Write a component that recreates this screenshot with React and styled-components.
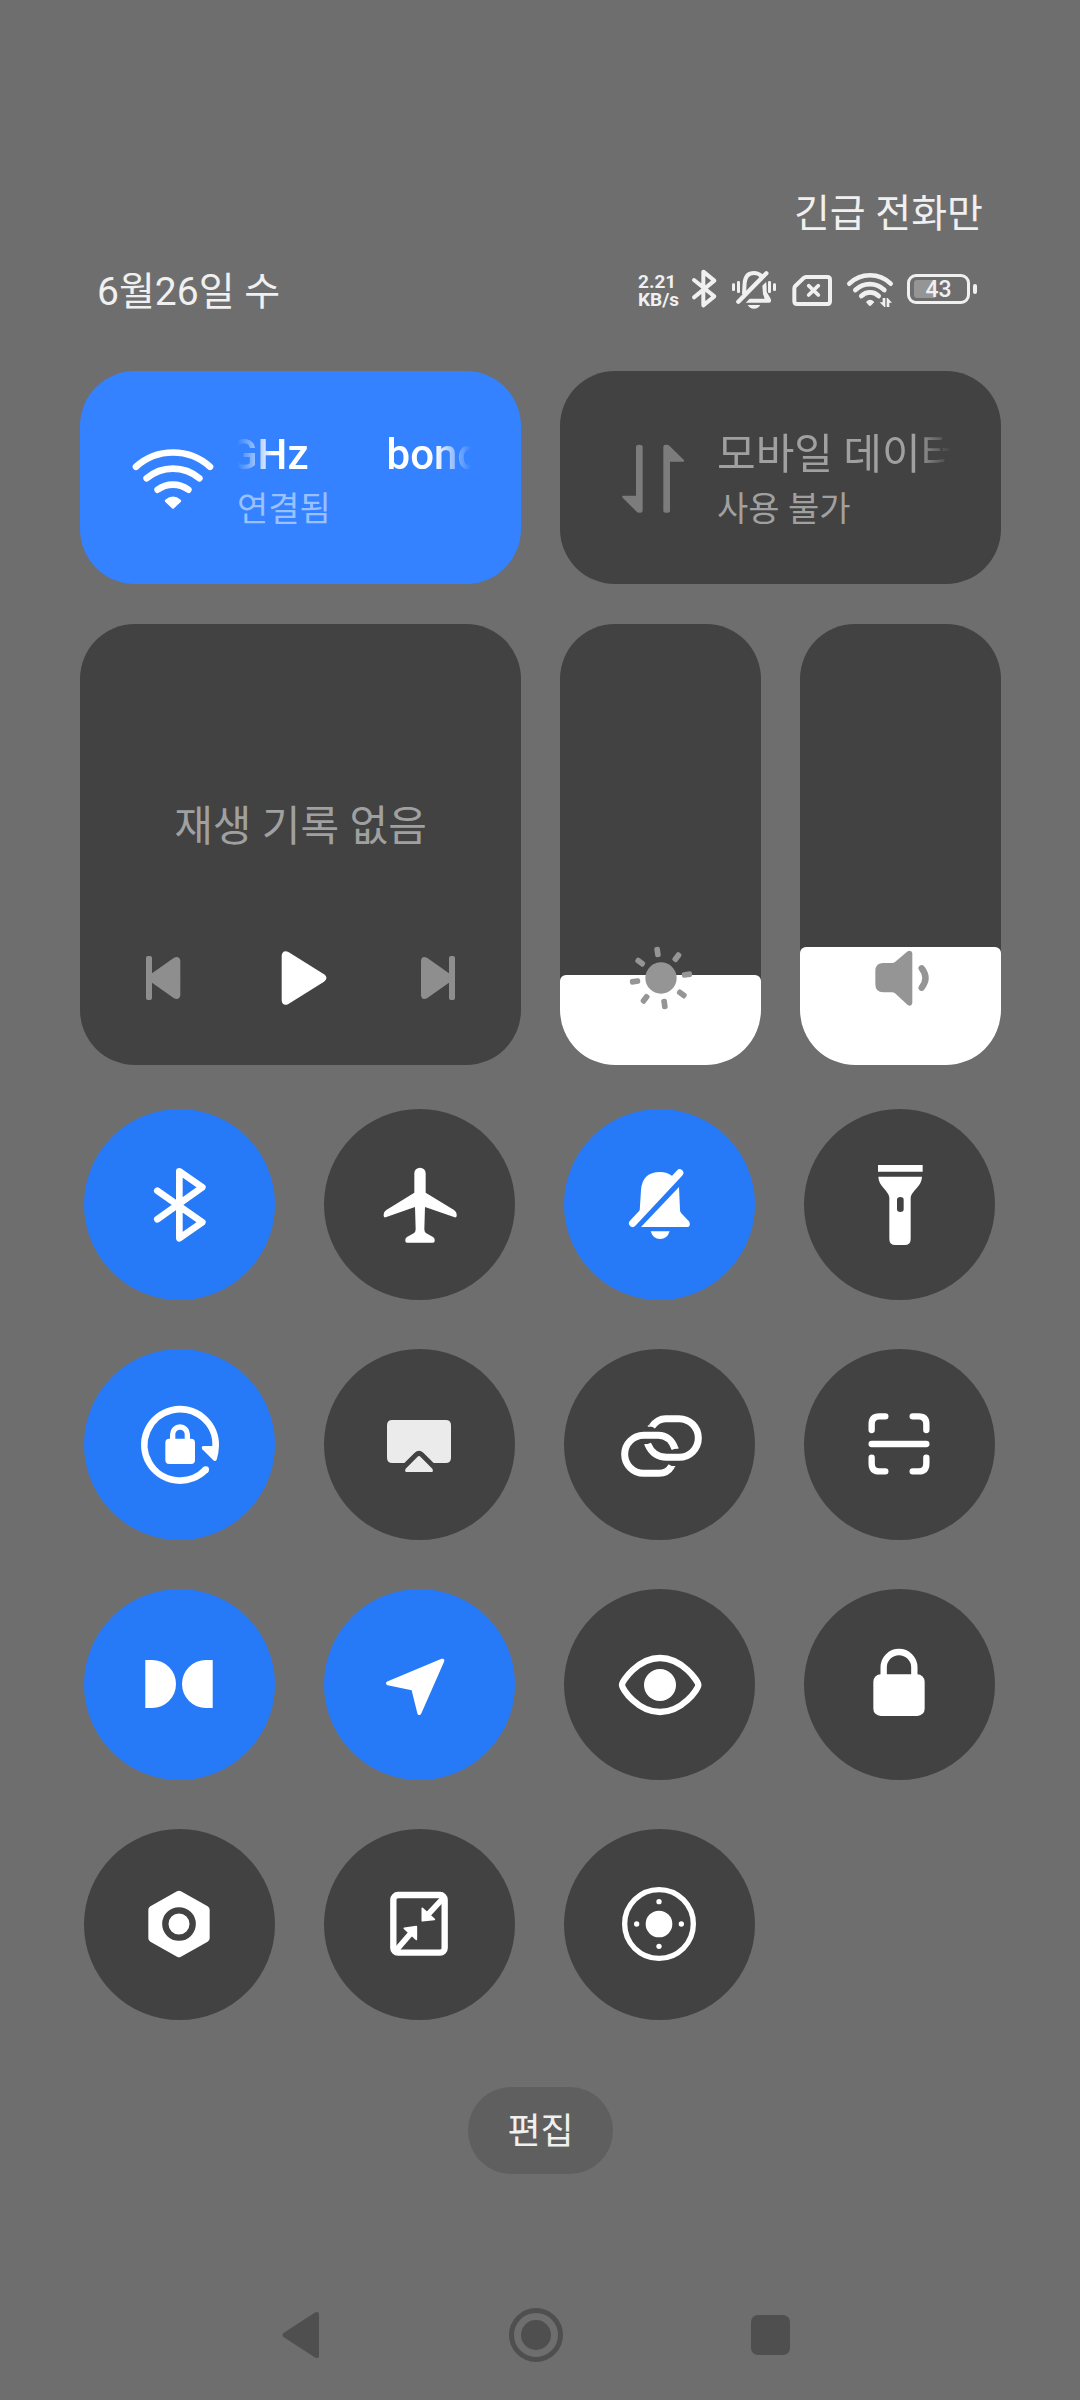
import React, { useState } from 'react'
import styled, { createGlobalStyle } from 'styled-components'

const MAX_LEVEL = 255

function App() {
    const [brightness, setBrightness] = useState(52)
    const [volume, setVolume] = useState(68)

    return (
        <>
            <GlobalStyle />
            <PageStyled>
                <HeaderStyled>
                    <Carrier>긴급 전화만</Carrier>
                    <div className="header-row">
                        <DateText>6월26일 수</DateText>
                        <StatusBar />
                    </div>
                </HeaderStyled>

                <PanelGrid>
                    <NetworkTile type="button" $active>
                        <WifiIcon />
                        <span className="labels">
                            <TileTitle $marquee>
                                <b>GHz</b>
                                <b>bond</b>
                            </TileTitle>
                            <TileState $active>연결됨</TileState>
                        </span>
                    </NetworkTile>
                    <NetworkTile type="button">
                        <DataIcon />
                        <span className="labels">
                            <TileTitle>모바일 데이터</TileTitle>
                            <TileState>사용 불가</TileState>
                        </span>
                    </NetworkTile>

                    <MediaCard>
                        <p>재생 기록 없음</p>
                        <div className="controls">
                            <MediaButton type="button" aria-label="이전">
                                <PreviousIcon />
                            </MediaButton>
                            <MediaButton type="button" aria-label="재생" $primary>
                                <PlayIcon />
                            </MediaButton>
                            <MediaButton type="button" aria-label="다음">
                                <NextIcon />
                            </MediaButton>
                        </div>
                    </MediaCard>
                    <Slider label="밝기" value={brightness} onChange={setBrightness} icon={<SunIcon />} />
                    <Slider label="음량" value={volume} onChange={setVolume} icon={<SpeakerIcon />} />
                </PanelGrid>

                <ToggleGrid>
                    {toggles.map(({ name, active, icon }) => (
                        <ToggleButton key={name} type="button" aria-label={name} aria-pressed={active} $active={active}>
                            <svg viewBox="0 0 573 573" fill="currentColor">{icon}</svg>
                        </ToggleButton>
                    ))}
                </ToggleGrid>

                <EditButton type="button">편집</EditButton>

                <NavBar>
                    <button type="button" aria-label="뒤로">
                        <svg viewBox="0 0 80 80" fill="currentColor">
                            <path d="M22.5 38 L54 17.5 Q58 15.5 58 20 V60 Q58 64.5 54 62.5 L22.5 42 Q20.5 40 22.5 38Z" />
                        </svg>
                    </button>
                    <button type="button" aria-label="홈">
                        <svg viewBox="0 0 80 80" fill="currentColor">
                            <circle cx="40" cy="40" r="24.5" fill="none" stroke="currentColor" strokeWidth="5" />
                            <circle cx="40" cy="40" r="15" />
                        </svg>
                    </button>
                    <button type="button" aria-label="최근 앱">
                        <svg viewBox="0 0 80 80" fill="currentColor">
                            <rect x="20" y="20" width="39" height="40" rx="7" />
                        </svg>
                    </button>
                </NavBar>
            </PageStyled>
        </>
    )
}

function StatusBar() {
    return (
        <StatusStyled>
            <span className="speed">2.21<br />KB/s</span>
            <StatusIcon $width={24} viewBox="0 0 72 126">
                <path d="M3 36 L64 85 L31 112 V11 L64 38 L3 88" fill="none" stroke="currentColor" strokeWidth="12" strokeLinecap="round" strokeLinejoin="round" />
            </StatusIcon>
            <StatusIcon $width={46} viewBox="0 0 138 126" fill="currentColor">
                <rect x="3" y="46" width="9" height="23" rx="4" />
                <rect x="18" y="39" width="9" height="36" rx="4" />
                <rect x="111" y="39" width="9" height="36" rx="4" />
                <rect x="126" y="46" width="9" height="23" rx="4" />
                <path d="M39 78 L41 44 Q44 15 69 15 Q82 15 91 24" fill="none" stroke="currentColor" strokeWidth="12" />
                <path d="M22 101 L106 16" fill="none" stroke="currentColor" strokeWidth="13" strokeLinecap="round" />
                <path d="M94 53 L105 42 Q107 46 107 72 L119 92 Q123 104 114 104 H44 L56 92 H101 L96 78Z" />
                <path d="M50 111 H88 Q82 122 69 122 Q56 122 50 111Z" />
            </StatusIcon>
            <StatusIcon $width={40} viewBox="0 0 120 126" fill="none" stroke="currentColor" strokeLinecap="round">
                <path d="M45 27 H109 Q117 27 117 35 V100 Q117 108 109 108 H18 Q10 108 10 100 V62 Q10 57 13 54 L38 30 Q41 27 45 27Z" strokeWidth="12" />
                <path d="M53 53 L82 81 M82 53 L53 81" strokeWidth="11" />
            </StatusIcon>
            <StatusIcon $width={48} viewBox="0 0 144 126" fill="currentColor">
                <g fill="none" stroke="currentColor" strokeWidth="14" strokeLinecap="round">
                    <path d="M13 47 A89 89 0 0 1 137 47" />
                    <path d="M31 66 A62 62 0 0 1 118 66" />
                    <path d="M49 84 A37 37 0 0 1 101 84" />
                </g>
                <path d="M63 102 Q75 88 88 102 L79 112 Q75 116 71 112Z" />
                <path d="M113 90 H121 V117 H118 L104 103 H113Z" />
                <path d="M125 117 V90 H128 L141 104 H133 V117Z" />
            </StatusIcon>
            <Battery aria-label="배터리 43%">
                <span className="body">
                    <i />
                    <b>43</b>
                </span>
                <span className="nub" />
            </Battery>
        </StatusStyled>
    )
}

function Slider({ label, value, onChange, icon }) {
    return (
        <SliderStyled>
            <span className="fill" style={{ height: `${value / MAX_LEVEL * 100}%` }} />
            {icon}
            <input
                type="range"
                aria-label={label}
                min="0"
                max={MAX_LEVEL}
                value={value}
                onChange={(e) => onChange(Number(e.target.value))}
            />
        </SliderStyled>
    )
}

const WifiIcon = () => (
    <svg viewBox="0 0 252 216" fill="currentColor">
        <g fill="none" stroke="currentColor" strokeWidth="20" strokeLinecap="round">
            <path d="M15 74 A166 166 0 0 1 237 74" />
            <path d="M47 109 A122 122 0 0 1 205 109" />
            <path d="M80 143 A78 78 0 0 1 172 143" />
        </g>
        <path d="M103 173 Q126 154 149 173 Q153 176 149 180 L129 199 Q126 202 123 199 L103 180 Q99 176 103 173Z" />
    </svg>
)

const DataIcon = () => (
    <svg viewBox="0 0 252 216" fill="currentColor">
        <path d="M75 14 Q75 8 85 8 Q95 8 95 14 V206 Q95 212 88 212 H84 Q80 212 77 209 L35 167 Q31 161 37 161 H75Z" />
        <path d="M157 206 V14 Q157 8 163 8 H168 Q172 8 175 11 L218 53 Q222 59 216 59 H177 V206 Q177 212 167 212 Q157 212 157 206Z" />
    </svg>
)

const PreviousIcon = () => (
    <svg viewBox="0 0 216 216" fill="currentColor">
        <rect x="57" y="42" width="18" height="132" rx="6" />
        <path d="M73 95 L141 47 Q157 40 160 56 V160 Q157 176 141 169 L73 121Z" />
    </svg>
)

const PlayIcon = () => (
    <svg viewBox="0 0 216 216" fill="currentColor">
        <path d="M50 41 Q52 23 69 29 L177 97 Q192 108 177 119 L69 187 Q52 193 50 175Z" />
    </svg>
)

const NextIcon = () => (
    <svg viewBox="0 0 216 216" fill="currentColor">
        <rect x="141" y="42" width="18" height="132" rx="6" />
        <path d="M143 95 L75 47 Q59 40 57 56 V160 Q59 176 75 169 L143 121Z" />
    </svg>
)

const SunIcon = () => (
    <svg viewBox="0 0 240 240" fill="currentColor">
        <circle cx="120" cy="120" r="47" />
        {[0, 45, 90, 135, 180, 225, 270, 315].map((angle) => (
            <rect key={angle} x="112" y="26" width="17" height="31" rx="6" transform={`rotate(${angle - 8} 120 120)`} />
        ))}
    </svg>
)

const SpeakerIcon = () => (
    <svg viewBox="0 0 240 240" fill="currentColor">
        <path d="M43 99 Q43 75 67 75 H93 Q98 75 102 72 L140 40 Q152 34 154 46 V195 Q152 207 140 201 L102 166 Q98 163 93 163 H67 Q43 163 43 139Z" />
        <path d="M182 91 Q205 120 182 149" fill="none" stroke="currentColor" strokeWidth="19" strokeLinecap="round" />
    </svg>
)

const toggles = [
    {
        name: '블루투스',
        active: true,
        icon: <path d="M220 245 L355 340 L286 388 V187 L355 235 L220 331" fill="none" stroke="currentColor" strokeWidth="20" strokeLinecap="round" strokeLinejoin="round" />
    },
    {
        name: '비행기 모드',
        active: false,
        icon: <path d="M271 193 A17 17 0 0 1 305 193 V251 L390 303 Q398 308 398 316 V320 Q398 326 392 325 L303 294 L301 361 Q301 370 307 373 L327 384 Q332 387 332 392 V396 Q332 401 327 401 H249 Q244 401 244 396 V392 Q244 387 249 384 L269 373 Q275 370 275 361 L273 294 L185 325 Q179 326 179 320 V316 Q179 308 187 303 L271 251Z" />
    },
    {
        name: '무음 모드',
        active: true,
        icon: (
            <>
                <path d="M227 306 L231 243 Q235 189 288 189 Q310 189 326 202 L335 206 L216 325Z" />
                <path d="M206 343 L347 192" fill="none" stroke="currentColor" strokeWidth="22" strokeLinecap="round" />
                <path d="M345 234 L348 303 Q348 309 352 313 L376 338 Q381 354 369 354 H231Z" />
                <path d="M260 367 H317 Q310 390 288 390 Q267 390 260 367Z" />
            </>
        )
    },
    {
        name: '손전등',
        active: false,
        icon: (
            <>
                <path d="M222 168 H356 V188 H222Z" />
                <path fillRule="evenodd" d="M223 203 H354 Q353 221 339 236 Q320 256 320 266 V390 Q320 408 302 408 H274 Q256 408 256 390 V266 Q256 256 238 236 Q224 221 223 203Z M279 272 V301 Q279 309 289 309 Q299 309 299 301 V272 Q299 264 289 264 Q279 264 279 272Z" />
            </>
        )
    },
    {
        name: '화면 회전 잠금',
        active: true,
        icon: (
            <>
                <path d="M365 362 A107 107 0 1 1 395 292" fill="none" stroke="currentColor" strokeWidth="20" />
                <circle cx="365" cy="362" r="10" />
                <path d="M359 291 H405 Q404 315 398 332 Q394 339 388 334 L355 301 Q350 292 359 291Z" />
                <rect x="244" y="269" width="89" height="76" rx="12" />
                <path d="M266 272 V256 A22 22 0 0 1 310 256 V272" fill="none" stroke="currentColor" strokeWidth="16" />
            </>
        )
    },
    {
        name: '화면 전송',
        active: false,
        icon: (
            <g fill="#ebebeb">
                <path d="M205 213 H365 Q381 213 381 229 V326 Q381 342 365 342 H329 L298 311 Q285 300 272 311 L241 342 H205 Q189 342 189 326 V229 Q189 213 205 213Z" />
                <path d="M280 324 Q285 318 290 324 L325 359 Q330 369 321 369 H250 Q240 369 245 359Z" />
            </g>
        )
    },
    {
        name: '상호 연결',
        active: false,
        icon: (
            <g fill="none" stroke="currentColor" strokeWidth="21">
                <path d="M264 233 Q280 209 305 209 H345 A58 58 0 0 1 345 325 H308 Q268 325 251 285" />
                <path d="M333 299 Q318 259 283 259 H239 A57 57 0 0 0 239 373 H285 Q310 373 323 351" />
                <path d="M253 231 H274 M243 287 H260 M323 297 H342 M311 353 H332" strokeWidth="4" strokeLinecap="round" />
            </g>
        )
    },
    {
        name: '스캐너',
        active: false,
        icon: (
            <g fill="none" stroke="currentColor" strokeWidth="19" strokeLinecap="round">
                <path d="M244 202 H226 Q203 202 203 225 V243" />
                <path d="M326 202 H344 Q367 202 367 225 V243" />
                <path d="M244 367 H226 Q203 367 203 344 V326" />
                <path d="M326 367 H344 Q367 367 367 344 V326" />
                <path d="M203 285 H367" />
            </g>
        )
    },
    {
        name: 'Dolby Atmos',
        active: true,
        icon: (
            <>
                <path d="M184 213 H204 A72 72 0 0 1 204 357 H184Z" />
                <path d="M386 213 H366 A72 72 0 0 0 366 357 H386Z" />
            </>
        )
    },
    {
        name: '위치',
        active: true,
        icon: <path d="M355 215 L192 283 L268 299 L286 372Z" stroke="currentColor" strokeWidth="12" strokeLinejoin="round" />
    },
    {
        name: '읽기 모드',
        active: false,
        icon: (
            <>
                <path d="M174 288 C174 276 222 207 288 207 S403 276 403 288 S355 369 288 369 S174 300 174 288Z" fill="none" stroke="currentColor" strokeWidth="19" />
                <circle cx="288" cy="288" r="48" />
            </>
        )
    },
    {
        name: '화면 잠금',
        active: false,
        icon: (
            <>
                <rect x="208" y="256" width="154" height="125" rx="22" />
                <path d="M239 262 V235 A46 46 0 0 1 331 235 V262" fill="none" stroke="currentColor" strokeWidth="19" />
            </>
        )
    },
    {
        name: '설정',
        active: false,
        icon: (
            <>
                <path d="M285 197 L365 242 V328 L285 373 L205 328 V242Z" stroke="currentColor" strokeWidth="24" strokeLinejoin="round" />
                <circle cx="285" cy="285" r="41" fill="none" stroke="#424242" strokeWidth="19" />
            </>
        )
    },
    {
        name: '한 손 모드',
        active: false,
        icon: (
            <>
                <rect x="208" y="198" width="154" height="173" rx="14" fill="none" stroke="currentColor" strokeWidth="19" />
                <path d="M359 206 L305 264 M213 368 L268 304" stroke="currentColor" strokeWidth="17" />
                <path d="M295 238 V275 L331 271Z M277 293 L241 298 L277 331Z" stroke="currentColor" strokeWidth="5" strokeLinejoin="round" />
            </>
        )
    },
    {
        name: '터치 도우미',
        active: false,
        icon: (
            <>
                <circle cx="285" cy="285" r="103" fill="none" stroke="currentColor" strokeWidth="16" />
                <circle cx="285" cy="285" r="40" />
                <circle cx="285" cy="218" r="8" />
                <circle cx="285" cy="352" r="8" />
                <circle cx="218" cy="285" r="8" />
                <circle cx="352" cy="285" r="8" />
            </>
        )
    }
]

const GlobalStyle = createGlobalStyle`
    :root{
        --background-color: #6e6e6e;
        --tile-color: #424242;
        --tile-active-color: #3482ff;
        --toggle-active-color: #277af7;
        --text-color: #f0f0f0;
        --muted-color: #a0a0a0;
    }

    *{
        box-sizing: border-box;
        margin: 0;
        padding: 0;
    }

    body{
        background-color: var(--background-color);
        color: var(--text-color);
        font-family: Roboto, 'Noto Sans CJK KR', sans-serif;
    }

    button{
        border: none;
        background: none;
        color: inherit;
        font-family: inherit;
        cursor: pointer;
    }

    svg{
        display: block;
    }
`;

const PageStyled = styled.main`
    display: flex;
    flex-direction: column;
    min-height: 100vh;
    padding: 186px 79px 0 80px;
`;

const HeaderStyled = styled.header`
    padding: 0 18px 0 17px;
    margin-bottom: 51px;
    font-size: 39px;
    line-height: 56px;

    .header-row{
        display: flex;
        justify-content: space-between;
        align-items: flex-start;
        margin-top: 22px;
    }
`;

const Carrier = styled.p`
    text-align: right;
`;

const DateText = styled.p`
    white-space: nowrap;
`;

const StatusStyled = styled.div`
    display: flex;
    align-items: center;
    gap: 14px;
    height: 50px;
    padding-right: 6px;

    .speed{
        padding-top: 4px;
        font-size: 19px;
        font-weight: 700;
        line-height: 18px;
    }
`;

const StatusIcon = styled.svg`
    width: ${({ $width }) => $width}px;
    height: 42px;
    overflow: visible;
`;

const Battery = styled.span`
    display: flex;
    align-items: center;
    gap: 3px;

    .body{
        display: grid;
        align-items: center;
        width: 63px;
        height: 30px;
        padding: 0 4px;
        border: 3px solid currentColor;
        border-radius: 9px;
    }

    i{
        grid-area: 1 / 1;
        width: 43%;
        height: 18px;
        border-radius: 3px 0 0 3px;
        background-color: #959595;
    }

    b{
        grid-area: 1 / 1;
        padding-top: 2px;
        font-size: 23px;
        font-weight: 500;
        line-height: 22px;
        text-align: center;
    }

    .nub{
        width: 4px;
        height: 10px;
        border-radius: 2px;
        background-color: currentColor;
    }
`;

const PanelGrid = styled.section`
    display: grid;
    grid-template-columns: repeat(4, 1fr);
    gap: 40px 39px;
`;

const NetworkTile = styled.button`
    grid-column: span 2;
    display: flex;
    align-items: center;
    gap: 22px;
    min-width: 0;
    height: 213px;
    padding: 0 50px 0 51px;
    border-radius: 55px;
    background-color: ${({ $active }) => $active ? 'var(--tile-active-color)' : 'var(--tile-color)'};
    color: ${({ $active }) => $active ? '#fff' : 'var(--muted-color)'};
    text-align: left;

    svg{
        flex: none;
        width: 84px;
        height: 72px;
        color: ${({ $active }) => $active ? '#fff' : '#7c7c7c'};
    }

    .labels{
        flex: 1;
        min-width: 0;
    }
`;

const TileTitle = styled.span`
    display: flex;
    gap: 78px;
    overflow: hidden;
    font-size: 42px;
    line-height: 64px;
    white-space: nowrap;
    mask-image: linear-gradient(to right, ${({ $marquee }) => $marquee ? 'transparent, #000 36px' : '#000'}, #000 calc(100% - 36px), transparent);

    b{
        font-weight: 500;
    }

    b:first-child{
        margin-left: -8px;
    }
`;

const TileState = styled.span`
    display: block;
    font-size: 34px;
    line-height: 45px;
    color: ${({ $active }) => $active ? '#99c0ff' : 'inherit'};
`;

const MediaCard = styled.article`
    grid-column: span 2;
    display: flex;
    flex-direction: column;
    justify-content: space-between;
    height: 441px;
    padding: 173px 47px 51px;
    border-radius: 55px;
    background-color: var(--tile-color);

    p{
        color: var(--muted-color);
        font-size: 42px;
        line-height: 60px;
        text-align: center;
    }

    .controls{
        display: flex;
        justify-content: space-between;
    }
`;

const MediaButton = styled.button`
    width: 72px;
    height: 72px;
    color: ${({ $primary }) => $primary ? '#fff' : '#8e8e8e'};
`;

const SliderStyled = styled.div`
    display: grid;
    justify-items: center;
    align-items: end;
    overflow: hidden;
    height: 441px;
    border-radius: 55px;
    background-color: var(--tile-color);

    .fill{
        grid-area: 1 / 1;
        width: 100%;
        border-radius: 6px 6px 0 0;
        background-color: #fff;
    }

    svg{
        grid-area: 1 / 1;
        width: 80px;
        height: 80px;
        margin-bottom: 47px;
        color: #959595;
    }

    input{
        grid-area: 1 / 1;
        width: 100%;
        height: 100%;
        opacity: 0;
        writing-mode: vertical-lr;
        direction: rtl;
    }
`;

const ToggleGrid = styled.section`
    display: grid;
    grid-template-columns: repeat(4, 1fr);
    gap: 49px;
    margin-top: 44px;
    padding: 0 6px 0 4px;
`;

const ToggleButton = styled.button`
    aspect-ratio: 1;
    border-radius: 50%;
    background-color: ${({ $active }) => $active ? 'var(--toggle-active-color)' : 'var(--tile-color)'};
    color: #fff;
`;

const EditButton = styled.button`
    align-self: center;
    margin-top: 67px;
    padding: 22px 39px 18px;
    border-radius: 44px;
    background-color: #5f5f5f;
    font-size: 36px;
    line-height: 47px;
`;

const NavBar = styled.nav`
    display: flex;
    justify-content: center;
    gap: 155px;
    margin-top: 121px;
    padding-right: 10px;
    color: #4f4f4f;

    button{
        width: 80px;
        height: 80px;
    }
`;

export default App
